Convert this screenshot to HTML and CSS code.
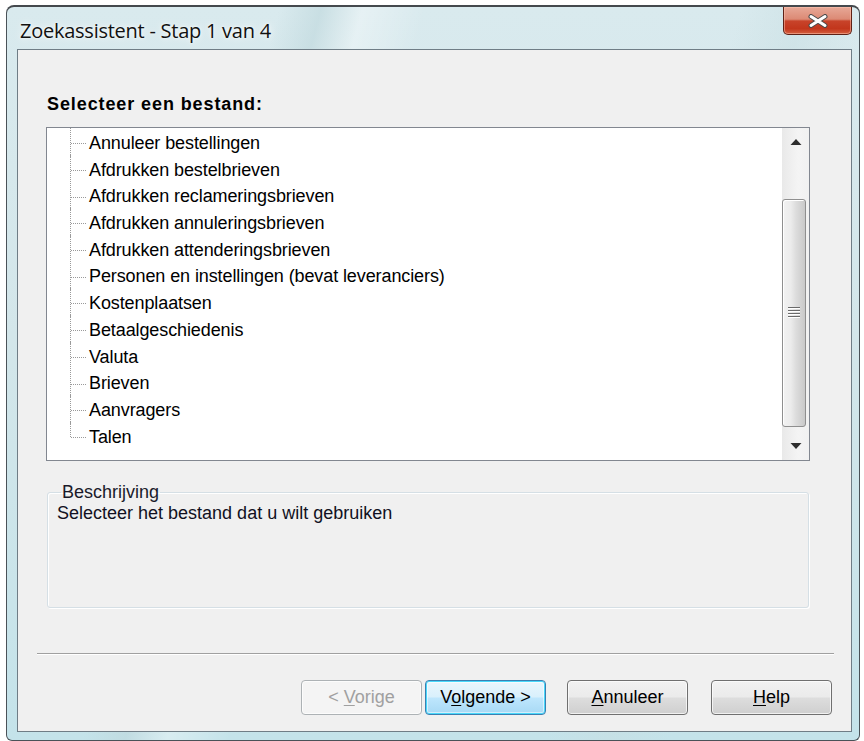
FILE: index.html
```html
<!DOCTYPE html>
<html lang="nl">
<head>
<meta charset="utf-8">
<title>Zoekassistent - Stap 1 van 4</title>
<link rel="stylesheet" href="styles.css">
</head>
<body>
<div class="window">
  <div class="titlebar">
    <span class="title">Zoekassistent - Stap 1 van 4</span>
    <button class="close" type="button" aria-label="Sluiten">
      <svg width="20" height="14" viewBox="0 0 20 14">
        <path d="M3 2.5 L17 11.5 M17 2.5 L3 11.5" stroke="#4a4a4a" stroke-width="5" stroke-linecap="round"/>
        <path d="M3 2.5 L17 11.5 M17 2.5 L3 11.5" stroke="#ffffff" stroke-width="3" stroke-linecap="round"/>
      </svg>
    </button>
  </div>

  <div class="client">
    <div class="prompt">Selecteer een bestand:</div>

    <div class="listbox">
      <ul class="tree">
        <li>Annuleer bestellingen</li>
        <li>Afdrukken bestelbrieven</li>
        <li>Afdrukken reclameringsbrieven</li>
        <li>Afdrukken annuleringsbrieven</li>
        <li>Afdrukken attenderingsbrieven</li>
        <li>Personen en instellingen (bevat leveranciers)</li>
        <li>Kostenplaatsen</li>
        <li>Betaalgeschiedenis</li>
        <li>Valuta</li>
        <li>Brieven</li>
        <li>Aanvragers</li>
        <li>Talen</li>
      </ul>
      <div class="scrollbar">
        <div class="sb-btn">
          <svg width="12" height="6" viewBox="0 0 12 6"><path d="M0.5 6 L6 0 L11.5 6 Z" fill="#2e2e2e"/></svg>
        </div>
        <div class="sb-track">
          <div class="sb-thumb">
            <span class="grip"></span>
          </div>
        </div>
        <div class="sb-btn">
          <svg width="12" height="6" viewBox="0 0 12 6"><path d="M0.5 0 L11.5 0 L6 6 Z" fill="#2e2e2e"/></svg>
        </div>
      </div>
    </div>

    <fieldset class="group">
      <legend>Beschrijving</legend>
      <p class="desc">Selecteer het bestand dat u wilt gebruiken</p>
    </fieldset>

    <hr class="sep">

    <div class="buttons">
      <button type="button" class="btn btn-back" disabled>&lt; <u>V</u>orige</button>
      <button type="button" class="btn btn-default">V<u>o</u>lgende &gt;</button>
      <button type="button" class="btn btn-cancel"><u>A</u>nnuleer</button>
      <button type="button" class="btn btn-help"><u>H</u>elp</button>
    </div>
  </div>
</div>
</body>
</html>
```

FILE: styles.css
```css
* { box-sizing: border-box; }

html, body {
  margin: 0;
  padding: 0;
  background: #ffffff;
}

body {
  width: 864px;
  height: 741px;
  overflow: hidden;
  font-family: "Liberation Sans", Arial, sans-serif;
  font-size: 18px;
  color: #000;
}

/* ---------- window frame ---------- */
.window {
  margin: 5px 0 0 6px;
  width: 854px;
  height: 736px;
  border: 1px solid #4a5258;
  border-top: 2px solid #44494d;
  border-radius: 8px 8px 6px 6px;
  padding: 0 7px 8px 10px;
  display: flex;
  flex-direction: column;
  background:
    linear-gradient(105deg, rgba(255,255,255,0) 26%, rgba(190,215,220,0.6) 30%, rgba(255,255,255,0.35) 34%, rgba(255,255,255,0) 40%),
    linear-gradient(105deg, rgba(255,255,255,0) 70%, rgba(200,222,226,0.5) 76%, rgba(255,255,255,0) 82%),
    linear-gradient(180deg, #d9eaee 0%, #d3e6ea 45%, #c4e3ea 100%);
}

.titlebar {
  height: 42px;
  display: flex;
  justify-content: space-between;
  align-items: flex-start;
}

.title {
  margin: 11px 0 0 3px;
  font-family: "Open Sans", "Noto Sans", sans-serif;
  font-size: 20px;
  line-height: 26px;
  letter-spacing: -0.25px;
  color: #111;
  text-shadow: 0 0 8px rgba(255,255,255,0.9), 0 0 3px rgba(255,255,255,0.9);
}

.close {
  margin-top: 0;
  width: 69px;
  height: 28px;
  padding: 0;
  border: 1px solid #5e2116;
  border-top: none;
  border-radius: 0 0 5px 5px;
  display: flex;
  align-items: center;
  justify-content: center;
  background: linear-gradient(180deg, #e7a897 0%, #dc8a75 45%, #c8432a 52%, #c2361c 80%, #d4603f 100%);
  box-shadow: inset 0 0 0 1px rgba(255,200,180,0.5);
}

/* ---------- client area ---------- */
.client {
  flex: 1;
  border: 1px solid #6f7d86;
  background: #f0f0f0;
  padding: 44px 0 0 28px;
  display: flex;
  flex-direction: column;
}

.prompt {
  margin-left: 1px;
  height: 20px;
  line-height: 20px;
  font-weight: bold;
  letter-spacing: 0.9px;
}

.listbox {
  margin-top: 13px;
  width: 764px;
  height: 334px;
  border: 1px solid #828790;
  background: #fff;
  display: flex;
}

.tree {
  flex: 1;
  list-style: none;
  margin: 0;
  padding: 2px 0 0 0;
}

.tree li {
  position: relative;
  height: 26.7px;
  line-height: 26.7px;
  padding-left: 42px;
  letter-spacing: -0.1px;
}

/* dotted connector lines of the tree */
.tree li::before {
  content: "";
  position: absolute;
  left: 24px;
  top: 50%;
  width: 16px;
  height: 1px;
  background: repeating-linear-gradient(90deg, #9a9a9a 0 1px, transparent 1px 2px);
}

.tree li::after {
  content: "";
  position: absolute;
  left: 23px;
  top: -2px;
  bottom: 0;
  width: 1px;
  background: repeating-linear-gradient(180deg, #9a9a9a 0 1px, transparent 1px 2px);
}

.tree li:last-child::after {
  bottom: 50%;
}

/* ---------- scrollbar ---------- */
.scrollbar {
  width: 27px;
  display: flex;
  flex-direction: column;
  background: linear-gradient(90deg, #e9e9e9 0%, #f4f4f4 60%, #f1f1f1 100%);
}

.sb-btn {
  height: 28px;
  display: flex;
  align-items: center;
  justify-content: center;
}

.sb-track {
  flex: 1;
  padding: 43px 3px 0 0;
}

.sb-thumb {
  height: 228px;
  border: 1px solid #8f8f8f;
  border-radius: 3px;
  background: linear-gradient(90deg, #f2f2f2 0%, #ececec 35%, #dcdcdc 60%, #c9c9c9 100%);
  box-shadow: inset 1px 1px 0 #fff;
  display: flex;
  align-items: center;
  justify-content: center;
}

.grip {
  width: 12px;
  height: 12px;
  background: repeating-linear-gradient(180deg, #6a6a6a 0 1px, #ffffff 1px 2px, transparent 2px 3px);
}

/* ---------- description group ---------- */
.group {
  margin: 21px 0 0 1px;
  width: 762px;
  height: 126px;
  padding: 0 0 0 9px;
  border: 1px solid #d5dfe5;
  border-radius: 3px;
  box-shadow: inset 1px 1px 0 #ffffff, 1px 1px 0 #ffffff;
}

.group legend {
  margin-left: 4px;
  padding: 0 1px;
  line-height: 20px;
  color: #1a1a2a;
}

.desc {
  margin: 0;
  line-height: 22px;
  color: #111122;
}

/* ---------- separator ---------- */
.sep {
  margin: 45px 0 0 -9px;
  width: 797px;
  height: 2px;
  border: none;
  border-top: 1px solid #a0a0a0;
  border-bottom: 1px solid #ffffff;
}

/* ---------- buttons ---------- */
.buttons {
  margin-top: 25px;
  padding-left: 255px;
  display: flex;
}

.btn {
  width: 121px;
  height: 35px;
  padding: 0;
  border: 1px solid #707070;
  border-radius: 4px;
  font-family: "Liberation Sans", Arial, sans-serif;
  font-size: 18px;
  color: #000;
  background: linear-gradient(180deg, #f2f2f2 0%, #ebebeb 48%, #dddddd 52%, #cfcfcf 100%);
  box-shadow: inset 0 0 0 1px rgba(255,255,255,0.7);
}

.btn u { text-underline-offset: 2px; }

.btn-back {
  border-color: #adb2b5;
  color: #a0a0a0;
  background: #f4f4f4;
}

.btn-default {
  margin-left: 3px;
  border-color: #3c7fb1;
  background: linear-gradient(180deg, #eaf6fd 0%, #d9f0fc 48%, #bee6fd 52%, #a7d9f5 100%);
  box-shadow: inset 0 0 0 1px #48d8fb, inset 0 0 0 2px rgba(255,255,255,0.5);
}

.btn-cancel { margin-left: 21px; }
.btn-help { margin-left: 23px; }
```
